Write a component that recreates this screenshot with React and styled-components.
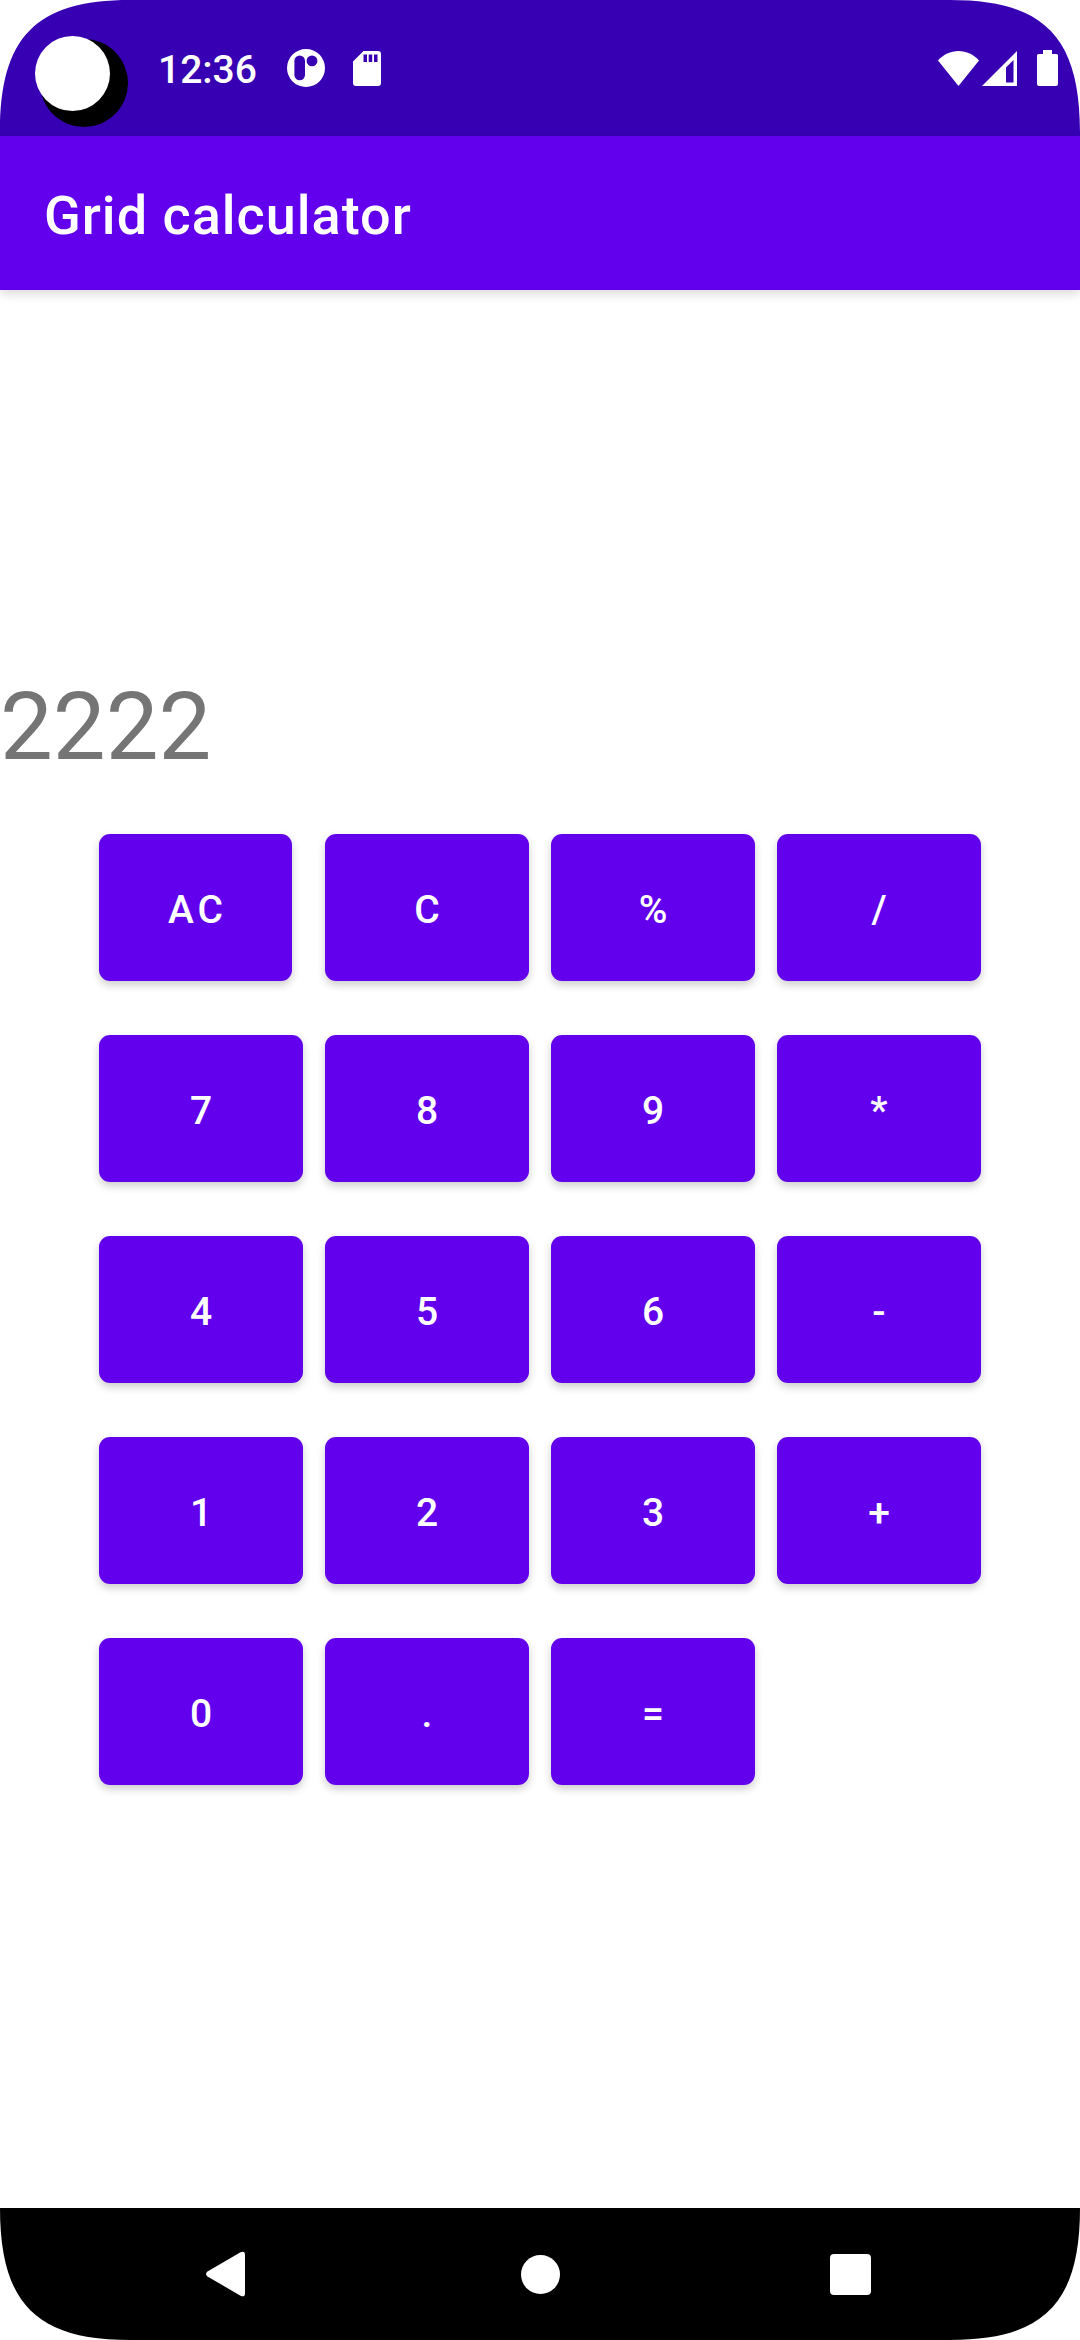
import React, { useState } from "react";
import styled, { createGlobalStyle } from "styled-components";

const GlobalStyle = createGlobalStyle`
  body {
    margin: 0;
    background: #fff;
    font-family: Roboto, "Noto Sans", sans-serif;
  }
`;

const Screen = styled.div`
  position: relative;
  display: flex;
  flex-direction: column;
  min-height: 100vh;
  background: #fff;
`;

const StatusBar = styled.header`
  display: flex;
  align-items: center;
  height: 136px;
  padding-right: 22px;
  background: #3700b3;
  color: #fff;
`;

const Clock = styled.time`
  margin: 0 30px;
  padding-top: 4px;
  font-size: 39px;
  font-weight: 500;
  line-height: 46px;
`;

const IconGroup = styled.div`
  display: flex;
  align-items: center;
  gap: ${(p) => p.$gap}px;
  margin-left: ${(p) => (p.$end ? "auto" : "0")};
`;

const Glyph = styled.svg`
  display: block;
  fill: currentColor;
`;

const AppBar = styled.div`
  display: flex;
  align-items: center;
  height: 154px;
  padding: 6px 44px 0;
  box-sizing: border-box;
  background: #6200ee;
  color: #fff;
  box-shadow: 0 4px 10px rgba(0, 0, 0, 0.15);
`;

const Title = styled.h1`
  margin: 0;
  font-size: 54px;
  font-weight: 500;
  line-height: 64px;
  letter-spacing: 1px;
`;

const Main = styled.main`
  display: flex;
  flex: 1;
  flex-direction: column;
  gap: 51px;
  padding: 381px 0 48px;
`;

const Display = styled.output`
  display: block;
  color: #757575;
  font-size: 94px;
  line-height: 112px;
`;

const Keypad = styled.div`
  display: grid;
  grid-template-columns: repeat(4, 1fr);
  gap: 54px 22px;
  padding: 0 99px;
`;

const Key = styled.button`
  height: 147px;
  margin: 0 ${(p) => (p.$narrow ? 11 : 0)}px 0 0;
  padding: 4px 0 0 4px;
  border: 0;
  border-radius: 11px;
  background: #6200ee;
  color: #fff;
  font-family: inherit;
  font-size: 39px;
  font-weight: 500;
  line-height: 46px;
  letter-spacing: 4px;
  box-shadow: 0 4px 8px rgba(0, 0, 0, 0.2);
  cursor: pointer;
`;

const NavBar = styled.nav`
  display: flex;
  height: 132px;
  padding: 0 74px;
  background: #000;
`;

const NavButton = styled.button`
  display: flex;
  flex: 1;
  align-items: center;
  justify-content: center;
  padding: 0;
  border: 0;
  background: none;
  color: #fff;
  cursor: pointer;
`;

const Corner = styled.svg`
  position: absolute;
  ${(p) => p.$v}: 0;
  ${(p) => p.$h}: 0;
  width: 130px;
  height: 132px;
  fill: #fff;
  transform: scale(${(p) => (p.$h === "right" ? -1 : 1)}, ${(p) => (p.$v === "bottom" ? -1 : 1)});
  pointer-events: none;
`;

const CORNERS = [
  ["top", "left"],
  ["top", "right"],
  ["bottom", "left"],
  ["bottom", "right"],
];

const KEYS = [
  "AC", "C", "%", "/",
  "7", "8", "9", "*",
  "4", "5", "6", "-",
  "1", "2", "3", "+",
  "0", ".", "=",
];

const OPERATIONS = {
  "+": (a, b) => a + b,
  "-": (a, b) => a - b,
  "*": (a, b) => a * b,
  "/": (a, b) => a / b,
  "%": (a, b) => a % b,
};

function evaluate(text) {
  const parts = text.match(/^(-?[\d.]+)([-+*/%])([\d.]+)$/);
  return parts ? String(OPERATIONS[parts[2]](Number(parts[1]), Number(parts[3]))) : text;
}

function press(text, key) {
  if (key === "AC") return "";
  if (key === "C") return text.slice(0, -1);
  if (key === "=") return evaluate(text);
  return text + key;
}

export default function App() {
  const [text, setText] = useState("2222");

  return (
    <>
      <GlobalStyle />
      <Screen>
        <StatusBar>
          <Glyph width="128" height="136" viewBox="0 0 128 136" aria-hidden="true">
            <circle cx="84" cy="83" r="44" fill="#000" />
            <circle cx="72.5" cy="73.5" r="37.5" />
          </Glyph>
          <Clock>12:36</Clock>
          <IconGroup $gap={28}>
            <Glyph width="38" height="38" viewBox="0 0 38 38" aria-hidden="true">
              <path
                fillRule="evenodd"
                d="M19 0a19 19 0 1 1 0 38a19 19 0 1 1 0-38ZM12.700 6.500A5.300 5.300 0 0 0 7.400 11.800V26a5.300 5.300 0 0 0 10.600 0V11.800A5.300 5.300 0 0 0 12.700 6.500ZM25 6.500a5.400 5.400 0 1 0 0 10.800a5.400 5.400 0 1 0 0-10.800Z"
              />
            </Glyph>
            <Glyph width="28" height="35" viewBox="0 0 28 35" aria-hidden="true">
              <path
                fillRule="evenodd"
                d="M10.500 0H25a3 3 0 0 1 3 3V32a3 3 0 0 1-3 3H3a3 3 0 0 1-3-3V10.500ZM10.500 3.500V11H14V3.500ZM15.700 3.500V11H19.200V3.500ZM21 3.500V11H24.500V3.500Z"
              />
            </Glyph>
          </IconGroup>
          <IconGroup $gap={20} $end>
            <IconGroup $gap={3}>
              <Glyph width="41" height="35" viewBox="0 0 41 35" aria-hidden="true">
                <path d="M20.500 35L0 9.500C5.500 3.500 12.500 0 20.500 0S35.500 3.500 41 9.500Z" />
              </Glyph>
              <Glyph width="35" height="35" viewBox="0 0 35 35" aria-hidden="true">
                <path fillRule="evenodd" d="M35 0V35H0ZM31.500 9L24 16.500V31.500H31.500Z" />
              </Glyph>
            </IconGroup>
            <Glyph width="21" height="36" viewBox="0 0 21 36" aria-hidden="true">
              <path d="M6 0H15V4H19.500A1.500 1.500 0 0 1 21 5.500V34a2 2 0 0 1-2 2H2a2 2 0 0 1-2-2V5.500A1.500 1.500 0 0 1 1.500 4H6Z" />
            </Glyph>
          </IconGroup>
        </StatusBar>

        <AppBar>
          <Title>Grid calculator</Title>
        </AppBar>

        <Main>
          <Display>{text}</Display>
          <Keypad>
            {KEYS.map((key) => (
              <Key
                key={key}
                type="button"
                $narrow={key === "AC"}
                onClick={() => setText((current) => press(current, key))}
              >
                {key}
              </Key>
            ))}
          </Keypad>
        </Main>

        <NavBar>
          <NavButton type="button" aria-label="Back">
            <Glyph width="46" height="46" viewBox="0 0 46 46" aria-hidden="true">
              <path d="M1.500 20.500L34.500 1.300Q39 -0.800 39 4V42Q39 46.800 34.500 44.700L1.500 25.500Q-1.500 23 1.500 20.500Z" />
            </Glyph>
          </NavButton>
          <NavButton type="button" aria-label="Home">
            <Glyph width="39" height="39" viewBox="0 0 39 39" aria-hidden="true">
              <circle cx="19.500" cy="19.500" r="19.500" />
            </Glyph>
          </NavButton>
          <NavButton type="button" aria-label="Overview">
            <Glyph width="41" height="41" viewBox="0 0 41 41" aria-hidden="true">
              <rect width="41" height="41" rx="4" />
            </Glyph>
          </NavButton>
        </NavBar>

        {CORNERS.map(([v, h]) => (
          <Corner key={v + h} $v={v} $h={h} viewBox="0 0 130 132" aria-hidden="true">
            <path d="M0 0H130C36 0 0 37 0 132Z" />
          </Corner>
        ))}
      </Screen>
    </>
  );
}
